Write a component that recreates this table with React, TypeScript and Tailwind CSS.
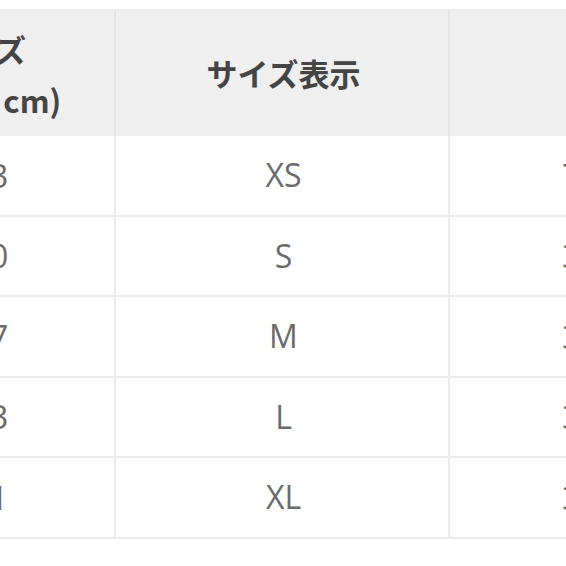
import React from "react";

const rows = [
  { a: "153", b: "XS", c: "70" },
  { a: "160", b: "S", c: "33" },
  { a: "167", b: "M", c: "33" },
  { a: "173", b: "L", c: "33" },
  { a: "181", b: "XL", c: "33" },
];

const font = { fontFamily: '"Open Sans", "Noto Sans CJK JP", sans-serif' };

export default function App() {
  return (
    <div className="w-[566px] h-[566px] overflow-hidden bg-white pt-[9px]" style={font}>
      <div className="ml-[-154px] grid w-[940px] grid-cols-[270px_334px_336px] border-t-2 border-[#ececec]">
        {/* header */}
        <div className="flex h-[125px] flex-col items-center justify-center border-r-2 border-[#e4e4e4] bg-[#efefef] text-[31px] font-bold leading-[51px] text-[#444]" style={{ fontFamily: '"Noto Sans CJK JP", sans-serif' }}>
          <span>サイズ</span>
          <span>(単位：cm)</span>
        </div>
        <div className="flex h-[125px] items-center justify-center border-r-2 border-[#e4e4e4] bg-[#efefef] pl-[3px] text-[31px] font-bold text-[#444]" style={{ fontFamily: '"Noto Sans CJK JP", sans-serif' }}>
          サイズ表示
        </div>
        <div className="h-[125px] bg-[#efefef]" />
        {rows.map((r, i) => (
          <React.Fragment key={i}>
            <div className="flex h-[80.5px] items-center justify-center border-r-2 border-b-2 border-[#ebebeb] text-[33px] text-[#6b6b6b]">
              {r.a}
            </div>
            <div className="flex h-[80.5px] items-center justify-center border-r-2 border-b-2 border-[#ebebeb] pl-[3px] text-[32px] text-[#6b6b6b]">
              {r.b}
            </div>
            <div className="flex h-[80.5px] items-center border-b-2 border-[#ebebeb] pl-[112px] text-[33px] text-[#6b6b6b]">
              {r.c}
            </div>
          </React.Fragment>
        ))}
      </div>
    </div>
  );
}
